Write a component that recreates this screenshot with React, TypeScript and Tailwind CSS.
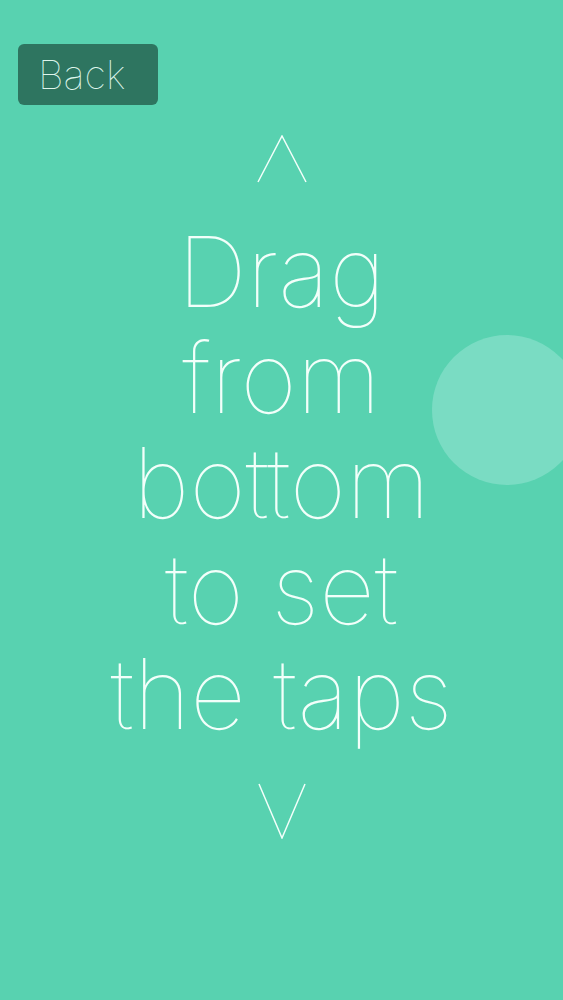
import React from "react";

const FONT = { fontFamily: "Inter, 'Liberation Sans', sans-serif" };

const UpChevron = () => (
  <svg width="50" height="48" viewBox="0 0 50 48" fill="none" className="block">
    <polyline points="1,47 25,1 49,47" stroke="#f2fffa" strokeWidth="1.5" />
  </svg>
);

const DownChevron = () => (
  <svg width="48" height="56" viewBox="0 0 48 56" fill="none" className="block">
    <polyline points="1,1 24,55 47,1" stroke="#f2fffa" strokeWidth="1.5" />
  </svg>
);

const App = () => {
  return (
    <div className="relative w-full h-[1000px] overflow-hidden bg-[#58d2b0]" style={FONT}>
      {/* decorative bubble */}
      <div className="absolute left-[432px] top-[335px] w-[150px] h-[150px] rounded-full bg-[#7adcc3]" />

      <div className="relative px-[18px] pt-[44px]">
        <button className="w-[140px] h-[61px] rounded-[6px] bg-[#2e7560] text-[#dff5ec] text-[40px] font-thin leading-none flex items-center pl-[20px]">
          Back
        </button>
      </div>

      <div className="relative flex flex-col items-center mt-[30px]">
        <UpChevron />
        <p className="mt-[36px] text-center whitespace-pre text-[#f2fffa] font-thin text-[97px] leading-[105.5px]">
          Drag
          <br />
          from
          <br />
          bottom
          <br />
          to set
          <br />
          the taps
        </p>
        <div className="mt-[36px]">
          <DownChevron />
        </div>
      </div>
    </div>
  );
};

export default App;
